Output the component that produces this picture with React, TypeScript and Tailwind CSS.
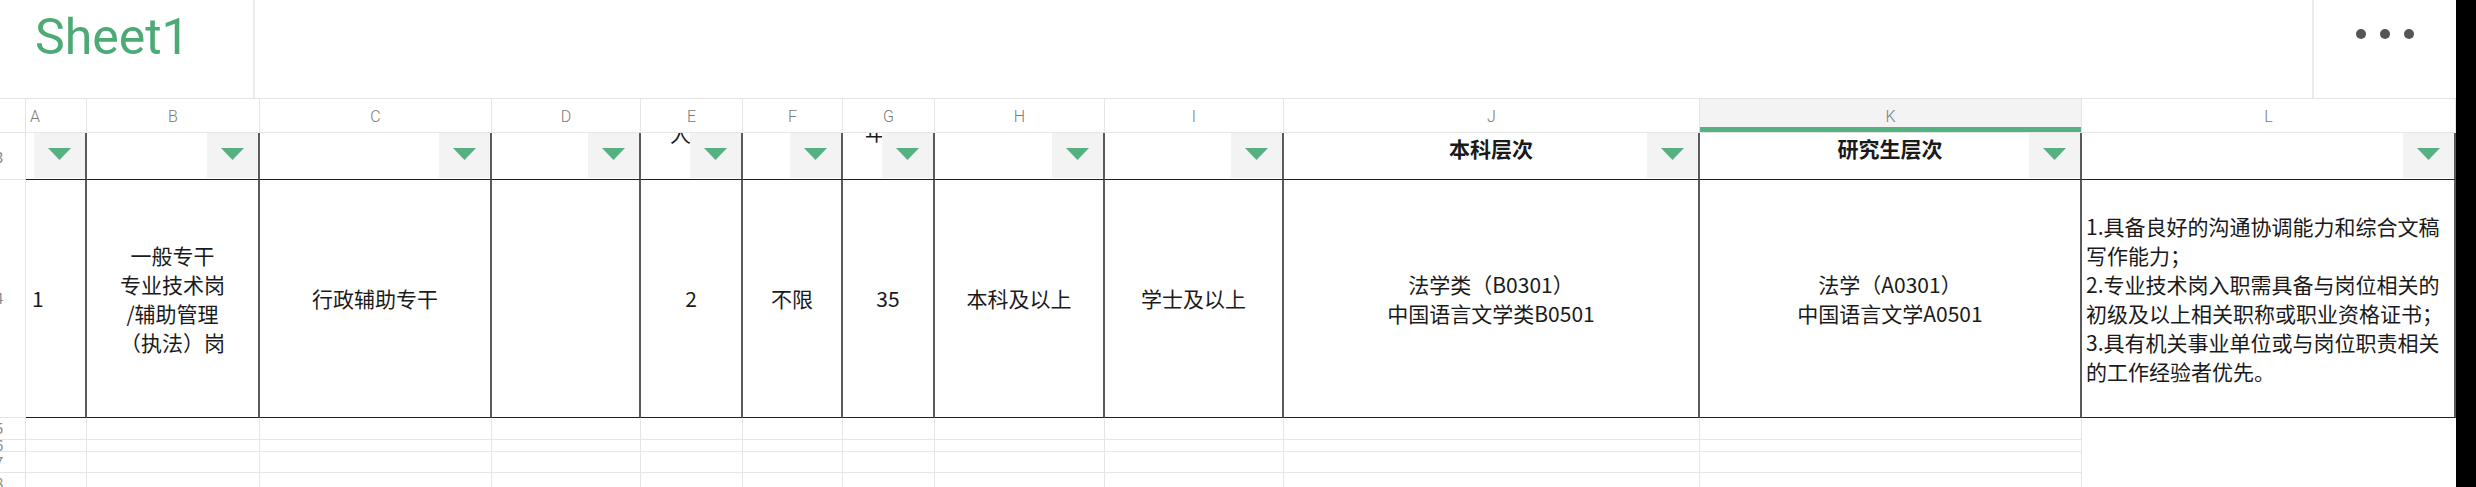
import React from 'react'

const GRID =
  'grid grid-cols-[26px_61px_173px_232px_149px_102px_100px_92px_170px_179px_416px_382px_374px]'

const letters = ['A', 'B', 'C', 'D', 'E', 'F', 'G', 'H', 'I', 'J', 'K', 'L']

const cjk = "font-['Noto_Sans_CJK_SC','Noto_Sans',sans-serif]"

function Tri() {
  return (
    <svg width="23" height="12" viewBox="0 0 23 12">
      <polygon points="0,0 23,0 11.5,12" fill="#55b082" />
    </svg>
  )
}

// 筛选行单元格：右侧带下拉按钮
function FilterCell({ children }: { children?: React.ReactNode }) {
  return (
    <div className="relative h-full overflow-hidden border-r-2 border-b border-r-[#5a5a5a] border-b-[#222]">
      {children}
      <div className="absolute right-0 top-0 bottom-[1px] w-[51px] bg-[#f3f3f3] flex items-center justify-center">
        <div className="-mt-[3px]">
          <Tri />
        </div>
      </div>
    </div>
  )
}

function DataCell({ children, className = '' }: { children?: React.ReactNode; className?: string }) {
  return (
    <div
      className={`h-full flex items-center border-r-2 border-b border-r-[#5a5a5a] border-b-[#222] text-[21px] leading-[29px] text-[#1a1a1a] ${className}`}
    >
      {children}
    </div>
  )
}

function RowNum({ n, className = '' }: { n: string; className?: string }) {
  return (
    <div
      className={`h-full overflow-hidden flex items-center border-r border-b border-[#e4e4e4] text-[15px] text-[#888] ${className}`}
    >
      <span className="-ml-[5px]">{n}</span>
    </div>
  )
}

function BlankRow({ n, h }: { n: string; h: string }) {
  return (
    <div className={`${GRID} ${h}`}>
      <RowNum n={n} />
      {letters.slice(0, 11).map(l => (
        <div key={l} className="h-full border-r border-b border-[#e6e6e6]" />
      ))}
      <div className="h-full" />
    </div>
  )
}

export default function App() {
  return (
    <div className={`w-[2476px] h-[487px] overflow-hidden flex bg-white ${cjk}`}>
      <div className="w-[2456px] flex flex-col">
        {/* 标题栏 */}
        <div className="h-[99px] flex border-b border-[#e3e3e3] shrink-0">
          <div className="w-[255px] border-r-2 border-[#ececec] pl-[35px] pt-[12px]">
            <span className="font-['Roboto',sans-serif] text-[50px] leading-none text-[#4caa74]">Sheet1</span>
          </div>
          <div className="flex-1" />
          <div className="w-[144px] border-l-2 border-[#ececec] flex justify-center gap-[14px] pt-[29px]">
            <span className="w-[10px] h-[10px] rounded-full bg-[#555]" />
            <span className="w-[10px] h-[10px] rounded-full bg-[#555]" />
            <span className="w-[10px] h-[10px] rounded-full bg-[#555]" />
          </div>
        </div>

        {/* 列标 */}
        <div className={`${GRID} h-[34px] shrink-0 font-['Roboto',sans-serif] font-light text-[16px] text-[#7a7a7a]`}>
          <div className="border-r border-b border-[#e4e4e4]" />
          {letters.map(l => (
            <div
              key={l}
              className={`relative flex items-center border-r border-b border-[#e6e6e6] pt-[2px] ${
                l === 'A' ? 'justify-start pl-[4px]' : 'justify-center'
              } ${l === 'K' ? 'bg-[#f3f3f3]' : ''}`}
            >
              {l}
              {l === 'K' && <div className="absolute left-0 right-0 bottom-0 h-[5px] bg-[#55b082]" />}
            </div>
          ))}
        </div>

        {/* 第3行：筛选 */}
        <div className={`${GRID} h-[47px] shrink-0 text-[21px] leading-[29px] text-[#1a1a1a]`}>
          <RowNum n="3" />
          <FilterCell />
          <FilterCell />
          <FilterCell />
          <FilterCell />
          <FilterCell>
            <span className="block ml-[29px] -mt-[14px]">人</span>
          </FilterCell>
          <FilterCell />
          <FilterCell>
            <span className="block ml-[22px] -mt-[16px]">年</span>
          </FilterCell>
          <FilterCell />
          <FilterCell />
          <FilterCell>
            <div className="text-center font-semibold pt-[1px]">本科层次</div>
          </FilterCell>
          <FilterCell>
            <div className="text-center font-semibold pt-[1px]">研究生层次</div>
          </FilterCell>
          <FilterCell />
        </div>

        {/* 第4行：数据 */}
        <div className={`${GRID} h-[238px] shrink-0`}>
          <RowNum n="4" />
          <DataCell className="pl-[6px]">1</DataCell>
          <DataCell className="justify-center text-center">
            <div>
              一般专干
              <br />
              专业技术岗
              <br />
              /辅助管理
              <br />
              （执法）岗
            </div>
          </DataCell>
          <DataCell className="justify-center">行政辅助专干</DataCell>
          <DataCell />
          <DataCell className="justify-center">2</DataCell>
          <DataCell className="justify-center">不限</DataCell>
          <DataCell className="justify-center">35</DataCell>
          <DataCell className="justify-center">本科及以上</DataCell>
          <DataCell className="justify-center">学士及以上</DataCell>
          <DataCell className="justify-center text-center">
            <div>
              法学类（B0301）
              <br />
              中国语言文学类B0501
            </div>
          </DataCell>
          <DataCell className="justify-center text-center">
            <div>
              法学（A0301）
              <br />
              中国语言文学A0501
            </div>
          </DataCell>
          <DataCell className="pl-[4px] whitespace-nowrap">
            <div>
              1.具备良好的沟通协调能力和综合文稿
              <br />
              写作能力；
              <br />
              2.专业技术岗入职需具备与岗位相关的
              <br />
              初级及以上相关职称或职业资格证书；
              <br />
              3.具有机关事业单位或与岗位职责相关
              <br />
              的工作经验者优先。
            </div>
          </DataCell>
        </div>

        <BlankRow n="5" h="h-[22px] shrink-0" />
        <BlankRow n="6" h="h-[12px] shrink-0" />
        <BlankRow n="7" h="h-[21px] shrink-0" />
        <BlankRow n="8" h="h-[22px] shrink-0" />
      </div>
      <div className="w-[20px] h-full bg-black" />
    </div>
  )
}
